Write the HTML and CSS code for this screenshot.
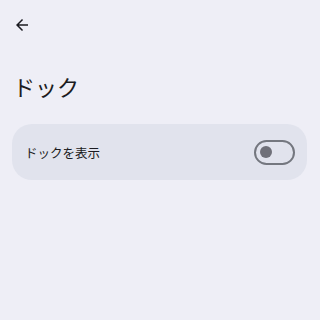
FILE: index.html
```html
<!DOCTYPE html>
<html>
  <head>
    <meta charset="UTF-8" />
    <title>ドック</title>
    <link rel="stylesheet" href="styles.css">
  </head>
  <body>
    <div class="screen">
      <div class="topbar">
        <svg class="back" viewBox="0 0 24 24" width="18" height="18">
          <path d="M20 11H7.83l5.59-5.59L12 4l-8 8 8 8 1.41-1.41L7.83 13H20v-2z" fill="#1b1b21" />
        </svg>
      </div>
      <h1 class="title">ドック</h1>
      <div class="card">
        <span class="label">ドックを表示</span>
        <div class="switch">
          <div class="knob"></div>
        </div>
      </div>
    </div>
  </body>
</html>
```

FILE: styles.css
```css
html,
body {
  margin: 0;
  padding: 0;
  background-color: #eeeef6;
}

.screen {
  width: 320px;
  height: 320px;
  font-family: "Noto Sans CJK JP", "Roboto", sans-serif;
  color: #1b1b21;
}

.topbar {
  display: flex;
  align-items: center;
  height: 50px;
  padding-left: 13px;
}

.back {
  display: block;
}

.title {
  margin: 22px 0 0 13px;
  font-size: 22px;
  font-weight: 400;
  line-height: 28px;
}

.card {
  display: flex;
  align-items: center;
  justify-content: space-between;
  margin: 24px 13px 0 12px;
  height: 56px;
  padding: 0 12px 0 13px;
  background-color: #e1e3ed;
  border-radius: 20px;
}

.label {
  font-size: 12.5px;
}

.switch {
  box-sizing: border-box;
  width: 41px;
  height: 25px;
  border: 2px solid #74777f;
  border-radius: 13px;
  display: flex;
  align-items: center;
  padding-left: 3.5px;
}

.knob {
  width: 12px;
  height: 12px;
  border-radius: 50%;
  background-color: #6f7079;
}
```
